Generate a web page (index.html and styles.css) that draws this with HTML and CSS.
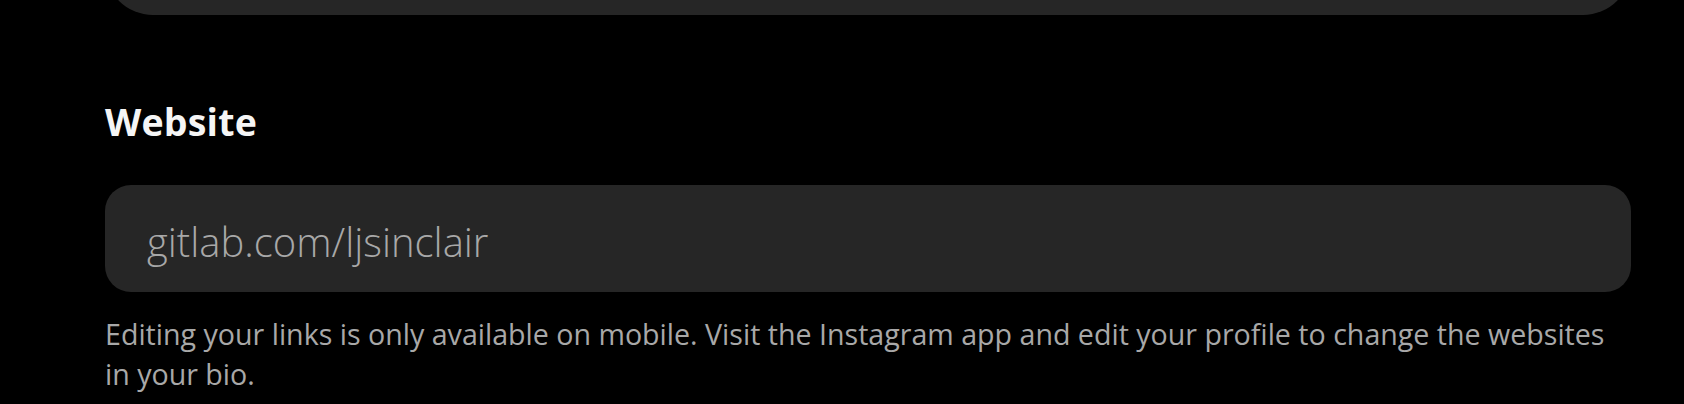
FILE: index.html
```html
<!DOCTYPE html>
<html>
<head>
    <link rel="stylesheet" href="styles.css">
</head>
<body>
    <div class="form">
        <div class="bio-box"></div>

        <div class="field">
            <h2 class="field-label">Website</h2>
            <div class="field-input">gitlab.com/ljsinclair</div>
            <p class="field-help">Editing your links is only available on mobile. Visit the Instagram app and edit your profile to change the websites in your bio.</p>
        </div>
    </div>
</body>
</html>
```

FILE: styles.css
```css
* {
    box-sizing: border-box;
    margin: 0;
    padding: 0;
}

body {
    font-family: "Open Sans", "Noto Sans", sans-serif;
    background-color: #000;
    color: #f5f5f5;
    width: 1684px;
    height: 404px;
    overflow: hidden;
}

.form {
    width: 1526px;
    margin-left: 105px;
}

.bio-box {
    height: 100px;
    margin-top: -85px;
    background-color: #262626;
    border-radius: 48px;
}

.field {
    padding-top: 85px;
}

.field-label {
    font-size: 37.5px;
    font-weight: 700;
    line-height: 44px;
    letter-spacing: 0.2px;
    color: #f5f5f5;
}

.field-input {
    margin-top: 41px;
    height: 107px;
    display: flex;
    align-items: center;
    padding: 6px 42px 0;
    background-color: #262626;
    border-radius: 26px;
    font-size: 40px;
    font-weight: 300;
    color: #a8a8a8;
}

.field-help {
    margin-top: 22px;
    font-size: 28.6px;
    line-height: 40px;
    color: #a8a8a8;
    padding-right: 20px;
}
```
